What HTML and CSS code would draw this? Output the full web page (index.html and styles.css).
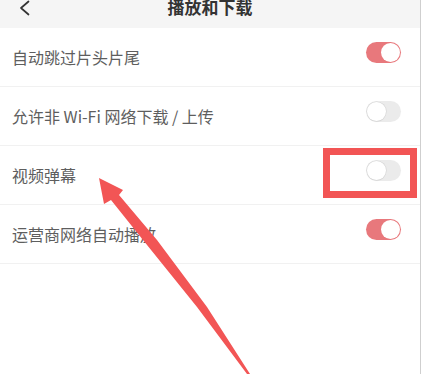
FILE: index.html
```html
<!DOCTYPE html>
<html lang="zh-CN">
<head>
<meta charset="utf-8">
<title>播放和下载</title>
<link rel="stylesheet" href="styles.css">
</head>
<body>
<div class="screen">
  <header class="topbar">
    <svg class="back" width="12" height="16" viewBox="0 0 12 16" aria-hidden="true">
      <polyline points="9.5,1.5 2,8 9.5,14.5" fill="none" stroke="#333" stroke-width="1.7" stroke-linecap="round" stroke-linejoin="round"/>
    </svg>
    <h1 class="title">播放和下载</h1>
  </header>
  <ul class="list">
    <li class="row"><span class="label">自动跳过片头片尾</span><span class="switch on"><span class="knob"></span></span></li>
    <li class="row"><span class="label">允许非 Wi-Fi 网络下载 / 上传</span><span class="switch"><span class="knob"></span></span></li>
    <li class="row"><span class="label">视频弹幕</span><span class="switch"><span class="knob"></span></span></li>
    <li class="row"><span class="label">运营商网络自动播放</span><span class="switch on"><span class="knob"></span></span></li>
  </ul>
  <div class="highlight"></div>
  <svg class="arrow" width="423" height="374" viewBox="0 0 423 374" aria-hidden="true">
    <polygon points="99,178 123,190 119,195 157,240 207,307 250,374 247,374 197,307 143,240 111,200 104,204" fill="#f25555"/>
  </svg>
</div>
</body>
</html>
```
FILE: styles.css
```css
html, body {
  margin: 0;
  padding: 0;
  background: #ffffff;
}
body {
  width: 423px;
  height: 374px;
  overflow: hidden;
  font-family: "Noto Sans CJK SC", "Noto Sans", sans-serif;
}
.screen {
  position: relative;
  width: 420px;
  height: 374px;
  border-right: 1px solid #cfcfcf;
  background: #ffffff;
}
.topbar {
  height: 28px;
  background: #f5f5f5;
  display: flex;
  align-items: flex-start;
  position: relative;
}
.back {
  margin-left: 19px;
  margin-top: 0px;
}
.title {
  position: absolute;
  left: 0;
  right: 0;
  top: -2px;
  margin: 0;
  text-align: center;
  font-size: 17px;
  line-height: 17px;
  font-weight: 700;
  color: #333333;
}
.list {
  list-style: none;
  margin: 0;
  padding: 0;
}
.row {
  height: 58px;
  border-bottom: 1px solid #f1f1f1;
  display: flex;
  align-items: center;
  justify-content: space-between;
  padding: 0 19px 0 12px;
}
.label {
  font-size: 16px;
  color: #5e5e5e;
  line-height: 20px;
  white-space: pre;
}
.switch {
  width: 35px;
  height: 21px;
  border-radius: 11px;
  background: #ebebeb;
  display: flex;
  align-items: center;
  padding: 0 1px;
  box-sizing: border-box;
  margin-bottom: 9px;
}
.switch .knob {
  width: 19px;
  height: 19px;
  border-radius: 50%;
  background: #ffffff;
  box-shadow: 0 0 0 0.6px #d6d6d6, 0 1px 1px rgba(0,0,0,0.06);
}
.switch.on {
  background: #e8787c;
  justify-content: flex-end;
}
.switch.on .knob {
  box-shadow: none;
}
.highlight {
  position: absolute;
  left: 323px;
  top: 148px;
  width: 94px;
  height: 50px;
  box-sizing: border-box;
  border: 7px solid #f25555;
}
.arrow {
  position: absolute;
  left: 0;
  top: 0;
  pointer-events: none;
}
```
